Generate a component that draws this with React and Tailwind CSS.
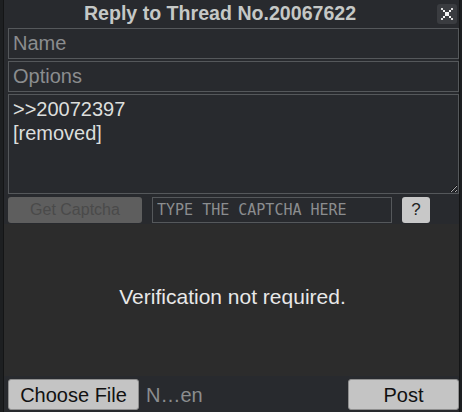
import { useState } from "react";

const CloseIcon = () => (
  <svg width="16" height="16" viewBox="0 0 16 16" shapeRendering="crispEdges">
    <path d="M4 4h2v2H4zM10 4h2v2h-2zM6 6h4v4H6zM4 10h2v2H4zM10 10h2v2h-2z" fill="#f2f2f2" />
    <path d="M2 2h2v2H2zM12 2h2v2h-2zM2 12h2v2H2zM12 12h2v2h-2z" fill="#dcdcdc" />
  </svg>
);

const App = () => {
  const [comment, setComment] = useState(">>20072397\n[removed]");

  return (
    <div className="w-[462px] h-[412px] bg-[#1d1f21] font-['Liberation_Sans',Arial,sans-serif] overflow-hidden">
      <div className="ml-[3px] w-[457px] h-full bg-[#282a2e] border-x border-[#141516] flex flex-col">
        {/* header */}
        <div className="h-[27px] flex items-center relative">
          <div className="flex-1 text-center text-[19.6px] font-bold text-[#c5c8c6] pr-[23px]">
            Reply to Thread No.20067622
          </div>
          <button className="absolute right-[2px] top-[4px] w-[20px] h-[20px] rounded-[3px] bg-[#3a3c40] flex items-center justify-center">
            <CloseIcon />
          </button>
        </div>

        <div className="pl-[4px] flex flex-col">
          <input
            placeholder="Name"
            className="h-[31px] mt-[1px] border border-[#55585b] bg-[#282a2e] px-[4px] text-[20px] text-[#c5c8c6] placeholder:text-[#8b8d8f] outline-none"
          />
          <input
            placeholder="Options"
            className="h-[31px] mt-[2px] border border-[#55585b] bg-[#282a2e] px-[4px] text-[20px] text-[#c5c8c6] placeholder:text-[#8b8d8f] outline-none"
          />
          <textarea
            value={comment}
            onChange={(e) => setComment(e.target.value)}
            className="h-[100px] mt-[2px] border border-[#55585b] bg-[#282a2e] px-[4px] py-[2px] text-[20px] leading-[24px] text-[#dcdedc] outline-none resize [color-scheme:dark]"
          />
          <div className="flex items-center h-[29px] mt-[1px]">
            <button
              disabled
              className="w-[134px] h-[26px] rounded-[3px] bg-[#5e5e5e] text-[16px] text-[#4a4a4a]"
            >
              Get Captcha
            </button>
            <input
              placeholder="TYPE THE CAPTCHA HERE"
              className="ml-[10px] w-[240px] h-[26px] border border-[#55585b] bg-[#282a2e] px-[4px] text-[15px] font-['DejaVu_Sans_Mono',monospace] text-[#c5c8c6] placeholder:text-[#8b8d8f] outline-none"
            />
            <button className="ml-[10px] w-[28px] h-[26px] rounded-[3px] bg-[#c8c8c8] text-[17px] text-[#222]">
              ?
            </button>
          </div>
        </div>

        {/* captcha area */}
        <div className="h-[152px] bg-[#2c2c2c] flex items-center justify-center">
          <span className="text-[21px] text-[#e8e8e8] mt-[-7px] ml-[2px]">Verification not required.</span>
        </div>

        {/* footer */}
        <div className="flex items-center pl-[4px] pt-[3px]">
          <button className="w-[131px] h-[31px] rounded-[3px] bg-[#c4c4c4] border border-[#8e8e8e] text-[20px] text-[#111]">
            Choose File
          </button>
          <span className="ml-[7px] text-[20px] text-[#8b8d8f]">N…en</span>
          <button className="ml-auto w-[111px] h-[31px] rounded-[3px] bg-[#c4c4c4] border border-[#8e8e8e] text-[20px] text-[#111]">
            Post
          </button>
        </div>
      </div>
    </div>
  );
};

export default App;
